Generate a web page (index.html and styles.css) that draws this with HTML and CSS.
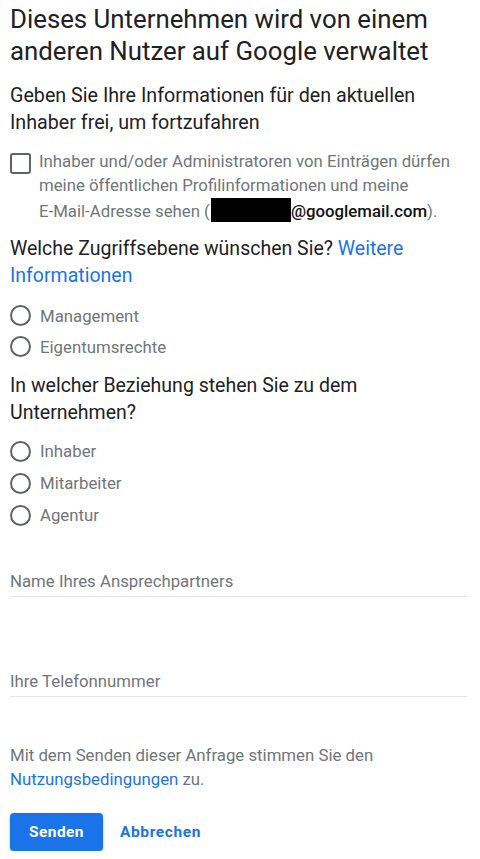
FILE: index.html
```html
<!DOCTYPE html>
<html lang="de">
<head>
<meta charset="utf-8">
<title>Unternehmen verwaltet</title>
<link rel="stylesheet" href="styles.css">
</head>
<body>
<main class="page">
  <h1 class="title">Dieses Unternehmen wird von einem anderen Nutzer auf Google verwaltet</h1>
  <p class="subtitle">Geben Sie Ihre Informationen für den aktuellen Inhaber frei, um fortzufahren</p>

  <label class="check">
    <span class="box"></span>
    <span class="check-text">Inhaber und/oder Administratoren von Einträgen dürfen meine öffentlichen Profilinformationen und meine <span class="nowrap">E-Mail-Adresse</span> sehen (<span class="redact"></span><span class="email">@googlemail.com</span>).</span>
  </label>

  <p class="question q1">Welche Zugriffsebene wünschen Sie? <a class="link" href="#">Weitere Informationen</a></p>
  <div class="radios r1">
    <label class="radio"><span class="circle"></span><span>Management</span></label>
    <label class="radio"><span class="circle"></span><span>Eigentumsrechte</span></label>
  </div>

  <p class="question q2">In welcher Beziehung stehen Sie zu dem Unternehmen?</p>
  <div class="radios r2">
    <label class="radio"><span class="circle"></span><span>Inhaber</span></label>
    <label class="radio"><span class="circle"></span><span>Mitarbeiter</span></label>
    <label class="radio"><span class="circle"></span><span>Agentur</span></label>
  </div>

  <div class="field f1">Name Ihres Ansprechpartners</div>
  <div class="field f2">Ihre Telefonnummer</div>

  <p class="terms">Mit dem Senden dieser Anfrage stimmen Sie den <a class="link" href="#">Nutzungsbedingungen</a> zu.</p>

  <div class="actions">
    <button class="btn-primary">Senden</button>
    <button class="btn-text">Abbrechen</button>
  </div>
</main>
</body>
</html>
```
FILE: styles.css
```css
* { box-sizing: border-box; }
html, body { margin: 0; padding: 0; background: #fff; }
body { font-family: Roboto, "Noto Sans", Arial, sans-serif; color: #202124; }
.page { padding: 3px 13px 0 10px; display: flex; flex-direction: column; }
.title { margin: 0; font-size: 25.8px; line-height: 32px; font-weight: 400; color: #202124; }
.subtitle { margin: 16px 0 0; font-size: 19.7px; line-height: 26.5px; font-weight: 400; color: #202124; }
.check { display: flex; gap: 8px; margin-top: 12.5px; align-items: flex-start; }
.box { flex: 0 0 21px; width: 21px; height: 21px; border: 2px solid #5f6368; border-radius: 3px; margin-top: 4px; }
.check-text { font-size: 16.8px; line-height: 24.5px; color: #70757a; }
.nowrap { white-space: nowrap; }
.redact { display: inline-block; width: 80px; height: 24px; background: #000; vertical-align: -5px; margin-left: 1px; }
.email { color: #111; font-weight: 500; }
.question { margin: 0; font-size: 19.5px; line-height: 27px; color: #202124; }
.q1 { margin-top: 12.3px; }
.q2 { margin-top: 9.5px; }
.link { color: #1a73e8; text-decoration: none; }
.radios { display: flex; flex-direction: column; }
.r1 { margin-top: 11.2px; }
.r2 { margin-top: 9.5px; }
.radio { display: flex; align-items: center; gap: 9px; height: 32px; font-size: 16.8px; color: #70757a; }
.r1 .radio { height: 31px; }
.circle { flex: 0 0 21px; width: 21px; height: 21px; border: 2px solid #5f6368; border-radius: 50%; }
.field { font-size: 16.8px; color: #70757a; border-bottom: 1.5px solid #e6e6e6; padding-bottom: 5px; line-height: 20px; }
.f1 { margin-top: 40px; }
.f2 { margin-top: 73.5px; }
.terms { margin: 46px 0 0; font-size: 16.8px; line-height: 24.5px; color: #70757a; }
.actions { display: flex; align-items: center; gap: 17px; margin-top: 21px; }
.btn-primary { width: 93px; height: 38px; border: none; border-radius: 4px; background: #1a73e8; color: #fff; font-family: Roboto, Arial, sans-serif; font-size: 15.5px; font-weight: 700; letter-spacing: 0.4px; box-shadow: 0 1px 3px rgba(60,64,67,0.35); }
.btn-text { border: none; background: none; padding: 0; color: #1a73e8; font-family: Roboto, Arial, sans-serif; font-size: 15.5px; font-weight: 700; letter-spacing: 0.6px; }
```
